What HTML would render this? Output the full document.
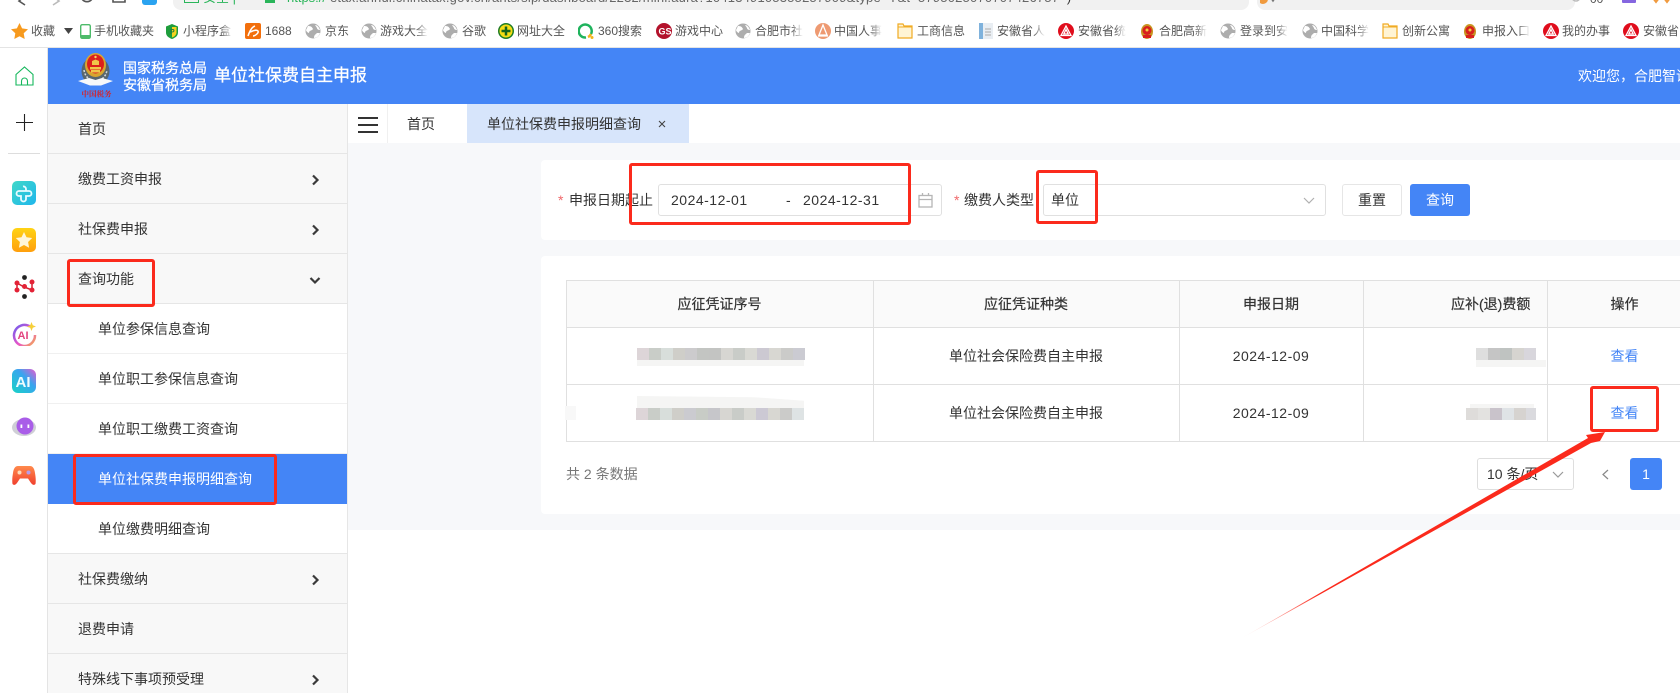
<!DOCTYPE html>
<html lang="zh-CN"><head><meta charset="utf-8"><title>单位社保费自主申报</title>
<style>
*{box-sizing:border-box;margin:0;padding:0}
html,body{width:1680px;height:693px;overflow:hidden;background:#fff}
body{position:relative;font-family:"Liberation Sans","Noto Sans CJK SC",sans-serif;font-size:14px;color:#333}
.a{position:absolute}
.t{position:absolute;white-space:nowrap;line-height:20px;height:20px}
.bm{position:absolute;top:23px;height:16px;line-height:16px;font-size:12px;color:#555;white-space:nowrap;overflow:hidden}
.f{-webkit-mask-image:linear-gradient(90deg,#000 75%,transparent);mask-image:linear-gradient(90deg,#000 75%,transparent)}
.ic{position:absolute;top:23px;width:16px;height:16px}
.row{position:absolute;left:48px;width:299px;height:50px;background:#f8f8f8;border-bottom:1px solid #e6e6e6;line-height:51px;padding-left:30px;white-space:nowrap}
.sub{background:#fff;border-bottom:1px solid #f0f0f0;padding-left:50px}
.red{position:absolute;border:3px solid #fb2a1c;border-radius:3px}
.v{position:absolute;background:#e0e0e0;width:1px}
.h{position:absolute;background:#e0e0e0;height:1px;left:566px;width:1114px}
.c{position:absolute;text-align:center;white-space:nowrap;line-height:20px;height:20px}
.blur{position:absolute;display:flex;height:12px}
.blur i{display:block;width:12px;height:12px}
.fa{position:absolute;background:#f5f5f4}
</style></head><body>

<!-- browser top -->
<svg class="a" style="left:0;top:0" width="170" height="12" fill="none" stroke="#555" stroke-width="1.600">
<path d="M25-4 19 1 25 5"/><path d="M53-4 59 1 53 5" stroke="#bbb"/>
<path d="M82-1a6 6 0 0 0 10 0"/><path d="M113-4V2H125V-4"/>
<rect x="142" y="-8" width="15" height="13" rx="3" fill="#2aa3f0" stroke="none"/>
</svg>
<div class="a" style="left:173px;top:-20px;width:1076px;height:30px;background:#f1f1f1;border-radius:8px"></div>
<div class="a" style="left:1257px;top:-20px;width:318px;height:30px;background:#f1f1f1;border-radius:8px"></div>
<div class="a" style="left:184px;top:-7px;width:15px;height:10px;border:1.500px solid #2ab55a"></div>
<div class="t" style="left:203px;top:-12px;font-size:13px;color:#2ab55a">安全 |</div>
<div class="a" style="left:265px;top:-7px;width:10px;height:10px;background:#2ab55a"></div>
<div class="t" style="left:287px;top:-12px;font-size:13px;color:#2ab55a">https://</div>
<div class="t" style="left:330px;top:-12px;font-size:13px;color:#666;letter-spacing:.2px">etax.anhui.chinatax.gov.cn/ants/sip/dashboard/2232/mini.aura?1041349105355257909&amp;type=Y&amp;t=5795025070707426757 <span style="color:#333">&nbsp;)</span></div>
<svg class="a" style="left:1260px;top:0" width="420" height="12" fill="none">
<circle cx="3" cy="-1" r="5" fill="#f09a3e"/><path d="M11-2l2 3 2-3" stroke="#777" stroke-width="1.500"/>
<circle cx="316" cy="-3" r="4" stroke="#bbb" stroke-width="1.500"/>
<text x="330" y="3" font-size="12" fill="#555" font-family="Liberation Sans">00</text>
<rect x="362" y="-8" width="14" height="11" rx="1" fill="#8566e0"/>
<path d="M393-2l3 4 3-4M404-2l3 4 3-4" stroke="#f09a3e" stroke-width="2"/>
</svg>

<!-- bookmarks -->
<svg class="a" style="left:11px;top:23px" width="17" height="16"><path d="M8.500 0l2.600 5.400 5.900.8-4.300 4.100 1 5.700-5.200-2.800-5.200 2.800 1-5.700L0 6.200l5.900-.8z" fill="#f79a1e"/></svg>
<div class="bm" style="left:31px">收藏</div>
<svg class="a" style="left:64px;top:28px" width="9" height="6"><path d="M0 0h9L4.500 6z" fill="#444"/></svg>
<svg class="a" style="left:80px;top:24px" width="11" height="15"><rect x=".7" y=".7" width="9.600" height="13.600" rx="1.500" fill="#fff" stroke="#4dbb6a" stroke-width="1.400"/><rect x="1" y="11" width="9" height="3" fill="#4dbb6a"/></svg>
<div class="bm" style="left:94px">手机收藏夹</div>
<svg class="a" style="left:166px;top:24px" width="12" height="15"><path d="M6 0l6 2.500v6C12 12 9 14 6 15 3 14 0 12 0 8.500v-6z" fill="#1e9d3c"/><path d="M6 3h4.500v5.500C10.500 11 8 13 6 13.500z" fill="#f4d21f"/><text x="4" y="10" font-size="7" fill="#1e7d3c" font-family="Liberation Sans" font-weight="700">P</text></svg>
<div class="bm f" style="left:183px;width:50px">小程序盒</div>
<div class="a" style="left:245px;top:23px;width:16px;height:16px;background:#f26f0c;border-radius:2px"></div>
<svg class="a" style="left:245px;top:23px" width="16" height="16" fill="none" stroke="#fff" stroke-width="1.500"><path d="M3 13C5 7 7 4 10 3M5 9c3-1 6-3 8-1 1 2-3 5-5 5"/></svg>
<div class="bm" style="left:265px">1688</div>
<svg width="0" height="0" style="position:absolute"><defs>
<g id="gl"><circle cx="8" cy="8" r="7.500" fill="#adadad"/><path d="M3 3c3 0 4 1 5 3-1 2-4 1-4 4-1 0-3-2-3-3zM9 15c0-3 1-3 3-5 1 0 3 0 3 0-1 3-3 5-6 5zM10 2c2 0 4 2 5 5-2 0-3-1-3-2z" fill="#fff"/></g>
<g id="rd"><circle cx="8" cy="8" r="8" fill="#e00d1c"/><path d="M8 3 3 12.500h10zM8 6.500 5.800 11H10.200z" fill="none" stroke="#fff" stroke-width="1.300"/></g>
<g id="nb"><ellipse cx="8" cy="8.500" rx="6" ry="7.500" fill="#c79520"/><circle cx="8" cy="7.500" r="4.500" fill="#d8201c"/><rect x="4" y="12" width="8" height="3" fill="#d8201c"/><circle cx="8" cy="7" r="1.500" fill="#f3cd44"/></g>
<g id="fd"><path d="M1 1h5l1 2h8v12H1z" fill="#fff4d4" stroke="#f0ab23" stroke-width="1.200"/><path d="M1 4h14" stroke="#f0ab23"/></g>
</defs></svg>
<svg class="ic" style="left:305px"><use href="#gl"/></svg><div class="bm" style="left:325px">京东</div>
<svg class="ic" style="left:361px"><use href="#gl"/></svg><div class="bm f" style="left:380px;width:48px">游戏大全</div>
<svg class="ic" style="left:442px"><use href="#gl"/></svg><div class="bm" style="left:462px">谷歌</div>
<svg class="ic" style="left:498px"><circle cx="8" cy="8" r="8" fill="#1f7d25"/><circle cx="8" cy="8" r="6.500" fill="#f6dd14"/><path d="M8 3.500v9M3.500 8h9" stroke="#15641b" stroke-width="2.500"/></svg><div class="bm" style="left:517px">网址大全</div>
<svg class="ic" style="left:578px" fill="none"><path d="M13 11A6.500 6.500 0 1 0 8 14.500" stroke="#1fb35d" stroke-width="2.500"/><path d="M10 14a6 6 0 0 0 3-3" stroke="#f3b41b" stroke-width="2.500"/><circle cx="14" cy="14.500" r="1.500" fill="#f3b41b"/></svg><div class="bm" style="left:598px">360搜索</div>
<svg class="ic" style="left:656px"><circle cx="8" cy="8" r="8" fill="#b3122b"/><text x="2.500" y="11.500" font-size="9" fill="#fff" font-weight="700" font-family="Liberation Sans">GS</text></svg><div class="bm" style="left:675px">游戏中心</div>
<svg class="ic" style="left:735px"><use href="#gl"/></svg><div class="bm f" style="left:755px;width:48px">合肥市社</div>
<svg class="ic" style="left:815px"><circle cx="8" cy="8" r="8" fill="#ee9a72"/><path d="M8 2 4 12h8zM3 13h10" fill="none" stroke="#fff" stroke-width="1.300"/></svg><div class="bm f" style="left:834px;width:48px">中国人事</div>
<svg class="ic" style="left:897px"><use href="#fd"/></svg><div class="bm" style="left:917px">工商信息</div>
<svg class="ic" style="left:978px"><rect x="1" y="0" width="14" height="16" fill="#e9eef3"/><rect x="1" y="0" width="4" height="16" fill="#7fb2dc"/><path d="M7 6h6M7 9h6M7 12h6" stroke="#aaa"/></svg><div class="bm f" style="left:997px;width:48px">安徽省人</div>
<svg class="ic" style="left:1058px"><use href="#rd"/></svg><div class="bm f" style="left:1078px;width:48px">安徽省统</div>
<svg class="ic" style="left:1139px"><use href="#nb"/></svg><div class="bm f" style="left:1159px;width:48px">合肥高新</div>
<svg class="ic" style="left:1220px"><use href="#gl"/></svg><div class="bm f" style="left:1240px;width:48px">登录到安</div>
<svg class="ic" style="left:1302px"><use href="#gl"/></svg><div class="bm f" style="left:1321px;width:48px">中国科学</div>
<svg class="ic" style="left:1382px"><use href="#fd"/></svg><div class="bm" style="left:1402px">创新公寓</div>
<svg class="ic" style="left:1462px"><use href="#nb"/></svg><div class="bm f" style="left:1482px;width:48px">申报入口</div>
<svg class="ic" style="left:1543px"><use href="#rd"/></svg><div class="bm" style="left:1562px">我的办事</div>
<svg class="ic" style="left:1623px"><use href="#rd"/></svg><div class="bm" style="left:1643px">安徽省</div>
<div class="a" style="left:0;top:47px;width:1680px;height:1px;background:#e4e4e4"></div>

<!-- left rail -->
<div class="a" style="left:47px;top:48px;width:1px;height:645px;background:#e4e4e4"></div>
<svg class="a" style="left:15px;top:66px" width="19" height="20" fill="none" stroke="#15b75c" stroke-width="1.100"><path d="M1 8.500 9.500 1 18 8.500V19H1z"/><path d="M6.500 19v-4a3 3 0 0 1 6 0v4"/></svg>
<svg class="a" style="left:16px;top:114px" width="17" height="17" stroke="#222" stroke-width="1.100"><path d="M8.500 0v17M0 8.500h17"/></svg>
<div class="a" style="left:8px;top:153px;width:32px;height:1px;background:#ddd"></div>
<svg class="a" style="left:12px;top:181px" width="24" height="24" fill="none"><defs><linearGradient id="cy" x1="0" y1="0" x2="1" y2="1"><stop offset="0" stop-color="#3fd8c8"/><stop offset="1" stop-color="#1fb6ec"/></linearGradient></defs><rect width="24" height="24" rx="5" fill="url(#cy)"/><path d="M11 5.500a2.500 2.500 0 0 1 3 2.500V10h3a2.500 2.500 0 0 1 0 5h-3v3a2.500 2.500 0 0 1-5 0v-3H7a2.500 2.500 0 0 1 0-5h7" stroke="#e8fbff" stroke-width="1.800"/></svg>
<svg class="a" style="left:12px;top:228px" width="24" height="24"><defs><linearGradient id="yl" x1="0" y1="0" x2="0" y2="1"><stop offset="0" stop-color="#ffd314"/><stop offset="1" stop-color="#ff9f0d"/></linearGradient></defs><rect width="24" height="24" rx="5" fill="url(#yl)"/><path d="M12 4l2.500 5.200 5.700.8-4.100 4 1 5.700-5.100-2.700-5.100 2.700 1-5.700-4.100-4 5.700-.8z" fill="#fff6d8"/></svg>
<svg class="a" style="left:14px;top:275px" width="21" height="24"><path d="M3 8v7M18 8v7M3 8l7 4 8 3" stroke="#d42030" stroke-width="1.500" fill="none"/><circle cx="10.500" cy="2.500" r="2.400" fill="#222"/><circle cx="10.500" cy="21.500" r="2.400" fill="#222"/><circle cx="3" cy="8" r="2.500" fill="#e32236"/><circle cx="18" cy="7" r="2.500" fill="#e32236"/><circle cx="3" cy="15" r="2.500" fill="#e32236"/><circle cx="18" cy="15" r="2.500" fill="#e32236"/><circle cx="10.500" cy="11.500" r="2.500" fill="#e32236"/></svg>
<svg class="a" style="left:12px;top:322px" width="25" height="24" fill="none"><defs><linearGradient id="rg" x1="0" y1="0" x2="1" y2="1"><stop offset="0" stop-color="#6a5cf0"/><stop offset=".55" stop-color="#e855c8"/><stop offset="1" stop-color="#f5b04a"/></linearGradient></defs><path d="M18 4.500A10.500 10.500 0 1 0 23 13" stroke="url(#rg)" stroke-width="2.500"/><text x="5.500" y="17" font-size="11" font-weight="700" fill="#e2447f" font-family="Liberation Sans">AI</text><path d="M19.500 0l1.300 3.200 3.200 1.300-3.200 1.300-1.300 3.200-1.300-3.200L15 4.500l3.200-1.300z" fill="#f6cf38"/></svg>
<svg class="a" style="left:12px;top:369px" width="24" height="24"><defs><linearGradient id="ai" x1="0" y1="1" x2="1" y2="0"><stop offset="0" stop-color="#18d3c6"/><stop offset=".6" stop-color="#38a5ef"/><stop offset="1" stop-color="#e85ad0"/></linearGradient></defs><rect width="24" height="24" rx="6" fill="url(#ai)"/><text x="3.500" y="18" font-size="15" font-weight="700" fill="#eefcff" font-family="Liberation Sans">AI</text></svg>
<svg class="a" style="left:12px;top:417px" width="24" height="20"><ellipse cx="12" cy="10.500" rx="12" ry="8.500" fill="#cfcfd6"/><ellipse cx="13" cy="9" rx="8.500" ry="8.500" fill="#a95de8"/><rect x="8.500" y="7.500" width="1.800" height="3.500" fill="#fff"/><rect x="15.500" y="7.500" width="1.800" height="3.500" fill="#fff"/></svg>
<svg class="a" style="left:12px;top:466px" width="24" height="19"><defs><linearGradient id="gm" x1="0" y1="0" x2="0" y2="1"><stop offset="0" stop-color="#ff8a4c"/><stop offset="1" stop-color="#f0402e"/></linearGradient></defs><path d="M6 0h12c3 0 4.500 3 5 7 .7 4 1 8 .5 11-1.500 1.500-3 1-4.500-1l-3-4.500H8L5 17c-1.500 2-3 2.500-4.500 1C0 15 .3 11 1 7 1.500 3 3 0 6 0z" fill="url(#gm)"/><circle cx="7.500" cy="6.500" r="2" fill="#ffd9b8"/><circle cx="16.500" cy="6.500" r="2" fill="#b89be8"/></svg>

<!-- header -->
<div class="a" style="left:48px;top:48px;width:1632px;height:56px;background:#4485f6"></div>
<svg class="a" style="left:78px;top:52px" width="36" height="46">
<ellipse cx="17.500" cy="19" rx="14" ry="14.500" fill="#59666e"/>
<path d="M6 18c1 7 6 11 11.500 11S28 25 29 18" fill="none" stroke="#d6dadd" stroke-width="1.500" stroke-dasharray="2 1.500"/>
<ellipse cx="17.500" cy="13" rx="10.500" ry="12" fill="#d9a52f"/>
<ellipse cx="17.500" cy="12" rx="8.500" ry="9.500" fill="#dc1f1c"/>
<path d="M12 15h11v2.500H12zM13 18h9v2.500h-9z" fill="#f0c64a"/>
<path d="M14 13v-4l3.500-1.500L21 9v4z" fill="#f0c64a"/><circle cx="17.500" cy="5" r="1.200" fill="#f6d35a"/>
<path d="M0 29l11-3 6.500 2 6.500-2 11 3-12 4.500h-11z" fill="#f6f8fa"/>
<text x="3.500" y="44.500" font-size="7.500" textLength="30" fill="#d4232a" font-family="Noto Serif CJK SC,serif" font-weight="700">中国税务</text>
</svg>
<div class="t" style="left:123px;top:58px;color:#fff;font-size:14px;-webkit-text-stroke:.25px #fff">国家税务总局</div>
<div class="t" style="left:123px;top:75px;color:#fff;font-size:14px;-webkit-text-stroke:.25px #fff">安徽省税务局</div>
<div class="t" style="left:214px;top:66px;color:#fff;font-size:17px;-webkit-text-stroke:.25px #fff">单位社保费自主申报</div>
<div class="t" style="left:1578px;top:66px;color:#fff;font-size:14px">欢迎您，合肥智谊</div>

<!-- sidebar -->
<div class="row" style="top:104px">首页</div>
<div class="row" style="top:154px">缴费工资申报</div>
<div class="row" style="top:204px">社保费申报</div>
<div class="row" style="top:254px">查询功能</div>
<div class="row sub" style="top:304px">单位参保信息查询</div>
<div class="row sub" style="top:354px">单位职工参保信息查询</div>
<div class="row sub" style="top:404px">单位职工缴费工资查询</div>
<div class="row sub" style="top:454px;background:#4485f6;color:#fff;border:0">单位社保费申报明细查询</div>
<div class="row sub" style="top:504px;border-bottom:1px solid #e6e6e6">单位缴费明细查询</div>
<div class="row" style="top:554px">社保费缴纳</div>
<div class="row" style="top:604px">退费申请</div>
<div class="row" style="top:654px">特殊线下事项预受理</div>
<div class="a" style="left:347px;top:104px;width:1px;height:589px;background:#e6e6e6"></div>
<svg class="a" style="left:308px;top:170px" width="14" height="523" fill="none" stroke="#3a3a3a" stroke-width="2.200">
<path d="M5 5.500l4.500 4.500-4.500 4.500M5 55.500l4.500 4.500-4.500 4.500M2.500 108l4.500 4.500 4.500-4.500M5 405.500l4.500 4.500-4.500 4.500M5 505.500l4.500 4.500-4.500 4.500"/>
</svg>

<!-- tabs -->
<div class="a" style="left:348px;top:104px;width:1332px;height:39px;background:#fff"></div>
<svg class="a" style="left:358px;top:116px" width="20" height="18" fill="#333"><rect y="1" width="20" height="2"/><rect y="8" width="20" height="2"/><rect y="15" width="20" height="2"/></svg>
<div class="a" style="left:387px;top:104px;width:1px;height:39px;background:#f0f0f0"></div>
<div class="t" style="left:407px;top:114px">首页</div>
<div class="a" style="left:467px;top:104px;width:222px;height:39px;background:#d7e5fb"></div>
<div class="t" style="left:487px;top:114px">单位社保费申报明细查询</div>
<svg class="a" style="left:658px;top:120px" width="8" height="8" stroke="#444" stroke-width="1.100"><path d="M1 1l6 6M7 1L1 7"/></svg>

<!-- content -->
<div class="a" style="left:348px;top:143px;width:1332px;height:387px;background:#f7f8fa"></div>
<div class="a" style="left:541px;top:160px;width:1139px;height:80px;background:#fff;border-radius:4px 0 0 4px"></div>
<div class="a" style="left:541px;top:256px;width:1139px;height:258px;background:#fff;border-radius:4px 0 0 4px"></div>

<!-- form -->
<div class="t" style="left:558px;top:190px;color:#f0686a">*</div>
<div class="t" style="left:569px;top:190px">申报日期起止</div>
<div class="a" style="left:658px;top:184px;width:284px;height:32px;border:1px solid #e0e0e0;border-radius:3px"></div>
<div class="t" style="left:671px;top:190px;letter-spacing:.5px">2024-12-01</div>
<div class="t" style="left:786px;top:190px">-</div>
<div class="t" style="left:803px;top:190px;letter-spacing:.5px">2024-12-31</div>
<svg class="a" style="left:918px;top:193px" width="15" height="15" fill="none" stroke="#b5b5b5" stroke-width="1.300"><rect x="1" y="2.500" width="13" height="11.500"/><path d="M1 6.500h13M4.500 0v3M10.500 0v3"/></svg>
<div class="t" style="left:954px;top:190px;color:#f0686a">*</div>
<div class="t" style="left:964px;top:190px">缴费人类型</div>
<div class="a" style="left:1043px;top:184px;width:283px;height:32px;border:1px solid #e0e0e0;border-radius:3px"></div>
<div class="t" style="left:1051px;top:190px">单位</div>
<svg class="a" style="left:1303px;top:197px" width="12" height="7" fill="none" stroke="#b0b0b0" stroke-width="1.200"><path d="M1 1l5 5 5-5"/></svg>
<div class="a" style="left:1342px;top:184px;width:60px;height:32px;border:1px solid #e6e6e6;border-radius:3px;background:#fff;text-align:center;line-height:30px">重置</div>
<div class="a" style="left:1410px;top:184px;width:60px;height:32px;border-radius:3px;background:#4485f6;color:#fff;text-align:center;line-height:32px">查询</div>

<!-- table -->
<div class="a" style="left:566px;top:281px;width:1114px;height:46px;background:#fafafa"></div>
<div class="h" style="top:280px"></div><div class="h" style="top:327px"></div><div class="h" style="top:384px"></div><div class="h" style="top:441px"></div>
<div class="v" style="left:566px;top:280px;height:162px"></div>
<div class="v" style="left:873px;top:280px;height:162px"></div>
<div class="v" style="left:1179px;top:280px;height:162px"></div>
<div class="v" style="left:1363px;top:280px;height:162px"></div>
<div class="v" style="left:1547px;top:280px;height:162px"></div>
<div class="c" style="left:566px;width:307px;top:294px;-webkit-text-stroke:.2px #333">应征凭证序号</div>
<div class="c" style="left:873px;width:306px;top:294px;-webkit-text-stroke:.2px #333">应征凭证种类</div>
<div class="c" style="left:1179px;width:184px;top:294px;-webkit-text-stroke:.2px #333">申报日期</div>
<div class="t" style="left:1451px;top:294px;-webkit-text-stroke:.2px #333">应补(退)费额</div>
<div class="c" style="left:1547px;width:155px;top:294px;-webkit-text-stroke:.2px #333">操作</div>

<div class="c" style="left:873px;width:306px;top:346px">单位社会保险费自主申报</div>
<div class="c" style="left:873px;width:306px;top:403px">单位社会保险费自主申报</div>
<div class="c" style="left:1179px;width:184px;top:346px;letter-spacing:.5px">2024-12-09</div>
<div class="c" style="left:1179px;width:184px;top:403px;letter-spacing:.5px">2024-12-09</div>
<div class="c" style="left:1547px;width:155px;top:346px;color:#4485f6">查看</div>
<div class="c" style="left:1547px;width:155px;top:403px;color:#4485f6">查看</div>

<!-- blurred -->
<div class="fa" style="left:637px;top:360px;width:167px;height:6px"></div>
<div class="blur" style="left:637px;top:348px"><i style="background:#ddd5d8"></i><i style="background:#c9cdc8"></i><i style="background:#d8dedb"></i><i style="background:#cfcec9"></i><i style="background:#cccbcd"></i><i style="background:#c3c5c2"></i><i style="background:#c3c4c2"></i><i style="background:#d7d6d2"></i><i style="background:#c9ccc8"></i><i style="background:#d9d9d4"></i><i style="background:#ccc9d2"></i><i style="background:#d8d7d2"></i><i style="background:#cbcbc9"></i><i style="background:#cbcbd2"></i></div>
<div class="fa" style="left:637px;top:396px;width:167px;height:12px;clip-path:polygon(0 0,70% 10%,100% 40%,100% 100%,0 100%)"></div>
<div class="fa" style="left:565px;top:406px;width:11px;height:14px;background:#f8f8f8"></div>
<div class="blur" style="left:636px;top:408px"><i style="background:#ddd5d8"></i><i style="background:#c9cdc8"></i><i style="background:#d8dedb"></i><i style="background:#cfcec9"></i><i style="background:#cbcbd0"></i><i style="background:#c8ccc6"></i><i style="background:#c6c6ca"></i><i style="background:#d7d6d2"></i><i style="background:#c9ccc8"></i><i style="background:#d9d9d4"></i><i style="background:#ccc9d4"></i><i style="background:#d8d7d2"></i><i style="background:#cbcbc9"></i><i style="background:#dee3e4"></i></div>
<div class="fa" style="left:1476px;top:360px;width:70px;height:7px"></div>
<div class="blur" style="left:1476px;top:348px"><i style="background:#dedede"></i><i style="background:#c5c5c5"></i><i style="background:#bfc3c1"></i><i style="background:#d6d4d0"></i><i style="background:#d8d6dc"></i></div>
<div class="fa" style="left:1470px;top:404px;width:64px;height:5px"></div>
<div class="blur" style="left:1466px;top:408px"><i style="background:#dedcda"></i><i style="background:#e3e2e0"></i><i style="background:#c9c3cb"></i><i style="background:#dfe3e6"></i><i style="background:#d6d3d0"></i><i style="background:#dadade;width:10px"></i></div>

<!-- pager -->
<div class="t" style="left:566px;top:464px;color:#777">共 2 条数据</div>
<div class="a" style="left:1477px;top:458px;width:97px;height:32px;border:1px solid #dedede;border-radius:3px"></div>
<div class="t" style="left:1487px;top:464px">10 条/页</div>
<svg class="a" style="left:1552px;top:471px" width="12" height="7" fill="none" stroke="#999" stroke-width="1.200"><path d="M1 1l5 5 5-5"/></svg>
<svg class="a" style="left:1602px;top:469px" width="7" height="11" fill="none" stroke="#888" stroke-width="1.200"><path d="M6 1L1 5.500 6 10"/></svg>
<div class="a" style="left:1630px;top:458px;width:32px;height:32px;background:#4485f6;border-radius:3px;color:#fff;text-align:center;line-height:32px">1</div>

<!-- annotations -->
<div class="red" style="left:67px;top:259px;width:88px;height:48px"></div>
<div class="red" style="left:73px;top:454px;width:204px;height:51px"></div>
<div class="red" style="left:629px;top:163px;width:282px;height:62px"></div>
<div class="red" style="left:1036px;top:170px;width:62px;height:54px"></div>
<div class="red" style="left:1590px;top:386px;width:69px;height:46px"></div>
<svg class="a" style="left:0;top:0;pointer-events:none" width="1680" height="693">
<defs><linearGradient id="ar" gradientUnits="userSpaceOnUse" x1="1242" y1="638" x2="1320" y2="593"><stop offset="0" stop-color="#fb2a1c" stop-opacity="0"/><stop offset="1" stop-color="#fb2a1c"/></linearGradient></defs>
<path d="M1242 638 1588 438 1586 435 1605 432 1600 441 1591 443z" fill="url(#ar)"/>
</svg>
</body></html>
